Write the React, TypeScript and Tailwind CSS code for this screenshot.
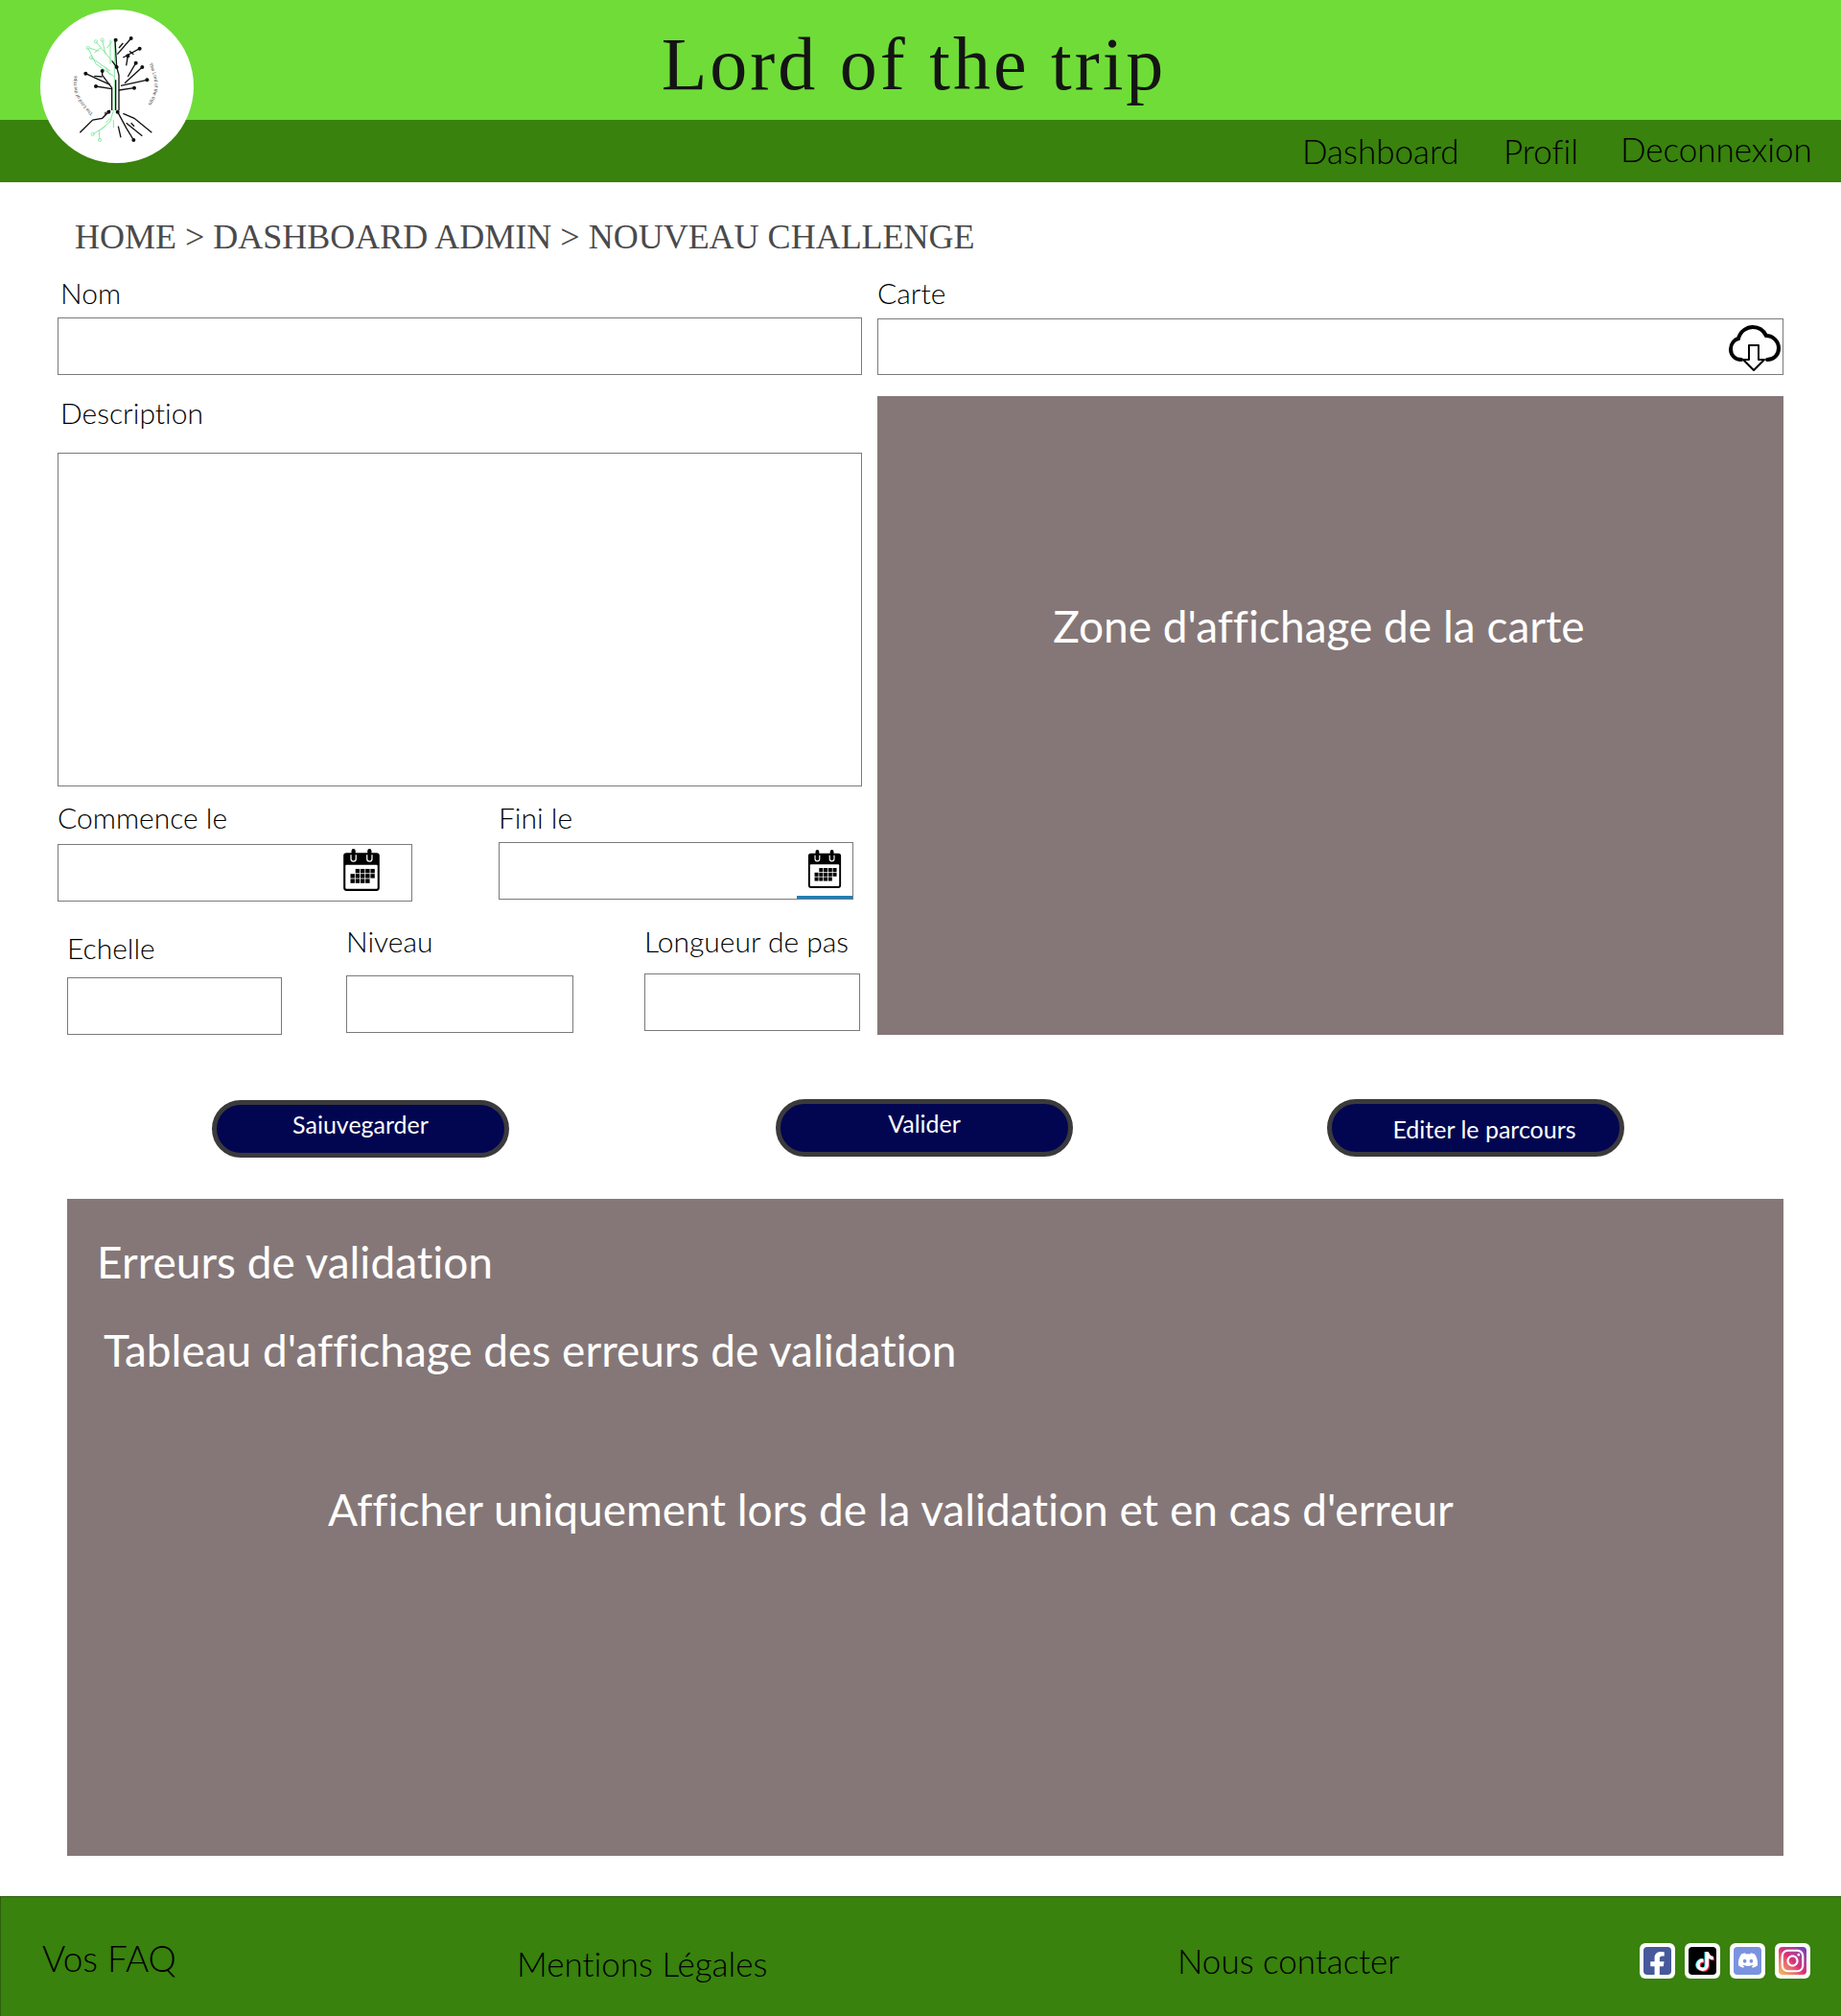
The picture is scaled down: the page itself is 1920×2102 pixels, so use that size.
import type { ReactNode } from 'react'
import { FaDiscord, FaFacebookF, FaInstagram, FaTiktok } from 'react-icons/fa'

const body = "font-['Lato','Open_Sans',sans-serif]"

function Label({ children, className = '' }: { children: ReactNode; className?: string }) {
  return <div className={`-translate-y-[1px] text-[30px] leading-[36px] text-black font-light ${className}`}>{children}</div>
}

function Box({ className = '', children }: { className?: string; children?: ReactNode }) {
  return <div className={`relative border border-[#7a7a7a] bg-white ${className}`}>{children}</div>
}

function CalendarIcon({ className = '' }: { className?: string }) {
  const cells = [
    [14, 21], [19, 21], [24, 21], [29, 21],
    [9, 26], [14, 26], [19, 26], [24, 26], [29, 26],
    [9, 31], [14, 31], [19, 31], [24, 31],
  ]
  return (
    <svg viewBox="0 0 40 44" className={className}>
      <rect x="2" y="5" width="36" height="38" rx="3" fill="#000" />
      <rect x="4" y="17" width="32" height="24" rx="1" fill="#fff" />
      <rect x="10" y="1" width="4" height="8" rx="2" fill="#000" />
      <rect x="26" y="1" width="4" height="8" rx="2" fill="#000" />
      <path d="M9.5 7v4a2.5 2.5 0 0 0 5 0V7M25.5 7v4a2.5 2.5 0 0 0 5 0V7" fill="none" stroke="#fff" strokeWidth="1.2" />
      {cells.map(([x, y]) => (
        <rect key={`${x}-${y}`} x={x} y={y} width="4.2" height="4.2" fill="#000" />
      ))}
    </svg>
  )
}

function CloudIcon() {
  return (
    <svg viewBox="0 0 56 50" className="absolute right-[1px] top-[5px] h-[50px] w-[56px]">
      <path
        d="M14 37C7 37 3 32 3 26C3 20 7 16 11 15C13 7 20 3 26 3C32 3 37 6 40 12C47 12 53 18 53 25C53 32 48 37 41 37"
        fill="none"
        stroke="#000"
        strokeWidth="4"
        strokeLinecap="round"
      />
      <path
        d="M22 22H32V37H38L27 48L16 37H22Z"
        fill="#fff"
        stroke="#000"
        strokeWidth="2"
        strokeLinejoin="round"
      />
    </svg>
  )
}

function Logo() {
  const black = [
    'M350 345V275L320 235L320 222', 'M350 278L300 270', 'M345 265L300 245L268 230', 'M320 240L295 238',
    'M372 345V235L365 210L360 125', 'M362 345V250', 'M372 282L420 275', 'M378 268L460 250', 'M390 260L445 210', 'M400 240L425 197',
    'M367 170L410 120', 'M385 180L437 152', 'M395 205L400 175', 'M372 150L385 135', 'M405 160L418 170', 'M365 210L350 190',
    'M345 345L320 370L290 375L250 415', 'M368 350L395 400L418 438', 'M385 355L420 370L475 415', 'M395 385L445 425', 'M370 395L378 430',
    'M410 385L420 395', 'M330 350V360',
  ]
  const green = [
    'M358 120V345', 'M358 240L300 200L275 150', 'M345 222L285 180', 'M350 190L300 130', 'M330 170L320 125', 'M310 160L280 150',
    'M345 125V200', 'M335 150L350 130', 'M295 165L315 150', 'M330 210L345 235',
    'M355 345L345 380L310 410L312 438', 'M330 395L290 420', 'M355 375V400', 'M345 370L330 385',
  ]
  const dots: [number, number][] = [
    [268, 230], [320, 222], [300, 270], [460, 250], [420, 275], [445, 210], [425, 197], [410, 120], [437, 152], [362, 125], [400, 175], [365, 210], [418, 438], [368, 350], [340, 350],
  ]
  const hollow: [number, number][] = [[275, 150], [285, 180], [300, 130], [320, 125], [312, 438], [290, 420]]
  return (
    <div className="absolute left-[42px] top-[10px] h-[160px] w-[160px] rounded-full bg-white">
      <svg viewBox="126 30 480 480" className="h-[160px] w-[160px]" fill="none">
        {green.map((d) => <path key={d} d={d} stroke="#86e8a4" strokeWidth="3" />)}
        {hollow.map(([x, y]) => <circle key={`${x}${y}`} cx={x} cy={y} r="5" stroke="#86e8a4" strokeWidth="2.5" />)}
        {black.map((d) => <path key={d} d={d} stroke="#111" strokeWidth="4" />)}
        {dots.map(([x, y]) => <circle key={`${x}${y}`} cx={x} cy={y} r="6" fill="#111" />)}
        <path id="logoArcLeft" d="M292 355Q205 280 262 190" />
        <path id="logoArcRight" d="M465 200Q515 290 432 360" />
        <text fontSize="15" fill="#444" fontFamily="Liberation Sans"><textPath href="#logoArcLeft">The Lord of the trips</textPath></text>
        <text fontSize="15" fill="#444" fontFamily="Liberation Sans"><textPath href="#logoArcRight">The Lord of the trips</textPath></text>
      </svg>
    </div>
  )
}

function ActionButton({ label, className = '' }: { label: string; className?: string }) {
  return (
    <div className={`flex h-[60px] w-[310px] items-center justify-center rounded-[30px] border-[5px] border-[#3a3a3c] bg-[#020650] text-[25px] text-white ${className}`}>
      {label}
    </div>
  )
}

function Social({ children, className = '' }: { children: ReactNode; className?: string }) {
  return (
    <div className="flex h-[37px] w-[37px] items-center justify-center rounded-[6px] bg-white p-[4px]">
      <div className={`relative flex h-full w-full items-center justify-center overflow-hidden rounded-[4px] text-white ${className}`}>{children}</div>
    </div>
  )
}

export default function App() {
  return (
    <div className={`relative flex h-[2102px] w-[1920px] flex-col bg-white [font-variant-ligatures:none] ${body}`}>
      <header className="relative flex h-[190px] flex-col">
        <div className="flex h-[125px] justify-center bg-[#6fdc38] pr-[14px]">
          <h1 className="mt-[22px] font-['Liberation_Serif',serif] text-[78px] leading-[90px] tracking-[3px] text-[#141414]">Lord of the trip</h1>
        </div>
        <nav className="flex h-[65px] items-start bg-[#38820d] pt-[12px] pl-[1358px] text-[35px] leading-[40px] font-light text-black">
          <span className="w-[210px]">Dashboard</span>
          <span className="w-[122px]">Profil</span>
          <span className="-mt-[2px]">Deconnexion</span>
        </nav>
        <Logo />
      </header>

      <main className="flex flex-1 flex-col">
        <div className="pt-[34px] pl-[78px] font-['Liberation_Serif',serif] text-[36px] leading-[46px] text-[#4a4a4a]">
          HOME &gt; DASHBOARD ADMIN &gt; NOUVEAU CHALLENGE
        </div>

        <div className="mt-[18px] flex gap-[16px] pl-[60px]">
          <section className="flex w-[839px] flex-col">
            <Label className="pl-[3px]">Nom</Label>
            <Box className="mt-[7px] h-[60px]" />
            <Label className="mt-[22px] pl-[3px]">Description</Label>
            <Box className="mt-[23px] h-[348px]" />
            <div className="mt-[15px] flex items-start">
              <div className="w-[460px]">
                <Label>Commence le</Label>
                <Box className="mt-[9px] h-[60px] w-[370px]">
                  <CalendarIcon className="absolute right-[31px] top-[3px] h-[46px] w-[42px]" />
                </Box>
              </div>
              <div>
                <Label>Fini le</Label>
                <Box className="mt-[7px] h-[60px] w-[370px]">
                  <CalendarIcon className="absolute right-[10px] top-[6px] h-[42px] w-[38px]" />
                  <div className="absolute bottom-0 right-0 h-[3px] w-[58px] bg-[#1f7fb5]" />
                </Box>
              </div>
            </div>
            <div className="flex items-start">
              <div className="mt-[31px] ml-[10px] w-[291px]">
                <Label>Echelle</Label>
                <Box className="mt-[12px] h-[60px] w-[224px]" />
              </div>
              <div className="mt-[24px] w-[311px]">
                <Label>Niveau</Label>
                <Box className="mt-[17px] h-[60px] w-[237px]" />
              </div>
              <div className="mt-[24px]">
                <Label>Longueur de pas</Label>
                <Box className="mt-[15px] h-[60px] w-[225px]" />
              </div>
            </div>
          </section>

          <section className="flex w-[945px] flex-col">
            <Label>Carte</Label>
            <Box className="mt-[8px] h-[59px]">
              <CloudIcon />
            </Box>
            <div className="mt-[22px] flex h-[666px] justify-center bg-[#857777] pt-[207px] pr-[24px] text-[46px] leading-[66px] text-white">
              Zone d'affichage de la carte
            </div>
          </section>
        </div>

        <div className="mt-[68px] flex items-start pl-[221px]">
          <ActionButton label="Saiuvegarder" className="pb-[8px]" />
          <ActionButton label="Valider" className="-mt-[1px] ml-[278px] pb-[8px]" />
          <ActionButton label="Editer le parcours" className="-mt-[1px] ml-[265px] pt-[3px] pl-[18px]" />
        </div>

        <section className="mt-[43px] ml-[70px] flex h-[685px] w-[1790px] flex-col bg-[#857777] text-[46px] leading-[66px] text-white">
          <div className="mt-[33px] ml-[31px]">Erreurs de validation</div>
          <div className="mt-[26px] ml-[38px]">Tableau d'affichage des erreurs de validation</div>
          <div className="mt-[100px] ml-[272px]">Afficher uniquement lors de la validation et en cas d'erreur</div>
        </section>
      </main>

      <footer className="flex h-[125px] items-center border-t border-l border-[#2f5f12] bg-[#38820d] text-black">
        <span className="mt-[4px] ml-[43px] w-[495px] text-[37px] font-light">Vos FAQ</span>
        <span className="mt-[14px] w-[689px] text-[35px] font-light">Mentions Légales</span>
        <span className="mt-[8px] w-[482px] text-[35px] font-light">Nous contacter</span>
        <div className="mt-[8px] flex gap-[10px]">
          <Social className="items-end bg-[#47599a] text-[27px]"><FaFacebookF className="translate-y-[3px]" /></Social>
          <Social className="bg-black text-[20px]">
            <FaTiktok className="absolute left-[6px] top-[5px] text-[#25f4ee]" />
            <FaTiktok className="absolute left-[8px] top-[6px] text-[#fe2c55]" />
            <FaTiktok className="absolute left-[7px] top-[5.5px]" />
          </Social>
          <Social className="bg-[#7a93e0] text-[22px]">
            <FaDiscord />
          </Social>
          <Social className="bg-gradient-to-tr from-[#f9c14d] via-[#d92d77] to-[#6a3ac0] text-[27px]"><FaInstagram /></Social>
        </div>
      </footer>
    </div>
  )
}
